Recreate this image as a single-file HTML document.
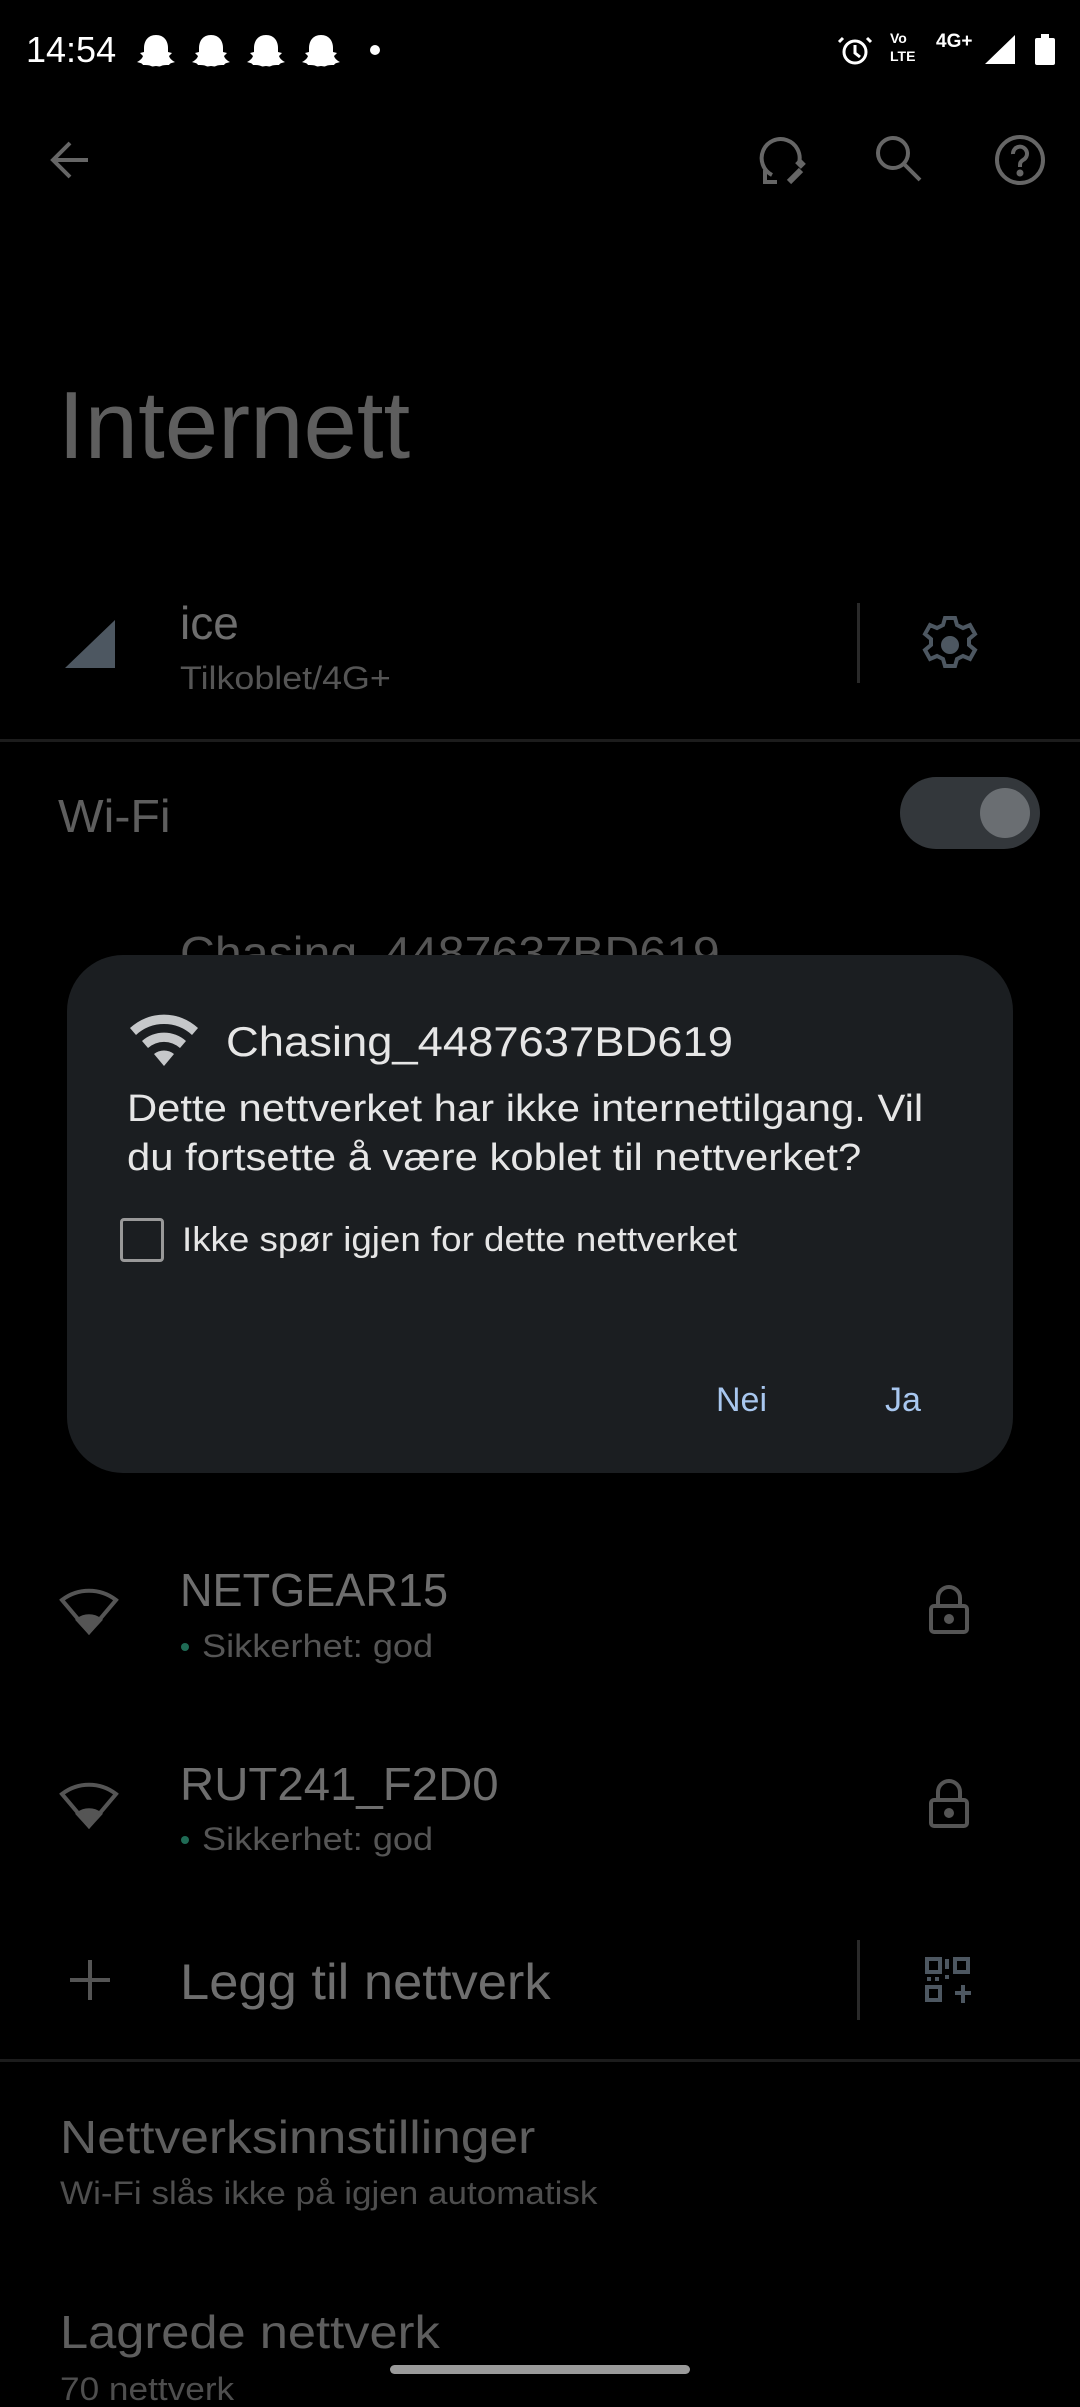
<!DOCTYPE html>
<html><head><meta charset="utf-8">
<style>
html,body{margin:0;padding:0;background:#000;}
body{width:1080px;height:2400px;position:relative;overflow:hidden;font-family:"Liberation Sans",sans-serif;}
.t{position:absolute;white-space:nowrap;line-height:1;transform-origin:0 0;}
svg{position:absolute;overflow:visible;}
</style></head><body>

<!-- status bar -->
<div class="t" style="left:26px;top:32px;font-size:36px;color:#fff;">14:54</div>
<svg width="1080" height="80" style="left:0;top:0">
  <g fill="#fff">
    <path id="g" d="M156 35c-8 0-12 6-12 13v4l-4 1 3 3c-1 3-4 5-6 6 3 1 5 1 6 3 3 0 6 0 8 1 2 1 3 0 5 0s3 1 5 0c2-1 5-1 8-1 1-2 3-2 6-3-2-1-5-3-6-6l3-3-4-1v-4c0-7-4-13-12-13z"/>
    <use href="#g" x="55"/><use href="#g" x="110"/><use href="#g" x="165"/>
    <circle cx="375" cy="50" r="5"/>
    <path d="M985 64L1015 35V64Z"/>
    <rect x="1035" y="38" width="20" height="27" rx="2"/>
    <rect x="1041" y="34" width="8" height="5"/>
  </g>
  <g fill="none" stroke="#fff" stroke-width="3">
    <circle cx="855" cy="52" r="11"/>
    <path d="M855 45v8l5 4M843 38l-4 4M867 38l4 4"/>
  </g>
  <text x="890" y="43" font-size="14" font-weight="bold" fill="#fff" font-family="Liberation Sans">Vo</text>
  <text x="890" y="61" font-size="14" font-weight="bold" fill="#fff" font-family="Liberation Sans">LTE</text>
  <text x="936" y="47" font-size="19" font-weight="bold" fill="#fff" font-family="Liberation Sans">4G+</text>
</svg>

<!-- toolbar -->
<svg width="1080" height="220" style="left:0;top:0" fill="none" stroke="#666" stroke-width="4">
  <path d="M88 160H54M70 143L53 160L70 177"/>
  <path d="M772 175A19 19 0 1 1 799 163"/>
  <path d="M765 170v12h12" />
  <path d="M789 182l12-12" stroke-width="6"/>
  <path d="M798 166l5-5" stroke-width="8"/>
  <circle cx="893" cy="153" r="15"/>
  <path d="M904 164L920 180"/>
  <circle cx="1020" cy="160" r="23"/>
  <path d="M1013 154a7 7 0 1 1 10 6c-3 2-3 3-3 7"/>
  <circle cx="1020" cy="173" r="1.5" fill="#666"/>
</svg>

<div class="t" style="left:58px;top:378px;font-size:96px;color:#5e5e5e;">Internett</div>

<!-- ice row -->
<svg width="80" height="80" style="left:0;top:0"><path d="M65 668L115 620V668Z" fill="#4d5761"/></svg>
<div class="t" style="left:180px;top:600px;font-size:46px;color:#6e6e6e;">ice</div>
<div class="t" style="left:180px;top:662px;font-size:32px;color:#555;transform:scaleX(1.12);">Tilkoblet/4G+</div>
<div style="position:absolute;left:857px;top:603px;width:3px;height:80px;background:#2a2a2a;"></div>
<svg width="60" height="60" style="left:920px;top:615px" fill="none" stroke="#4d5761" stroke-width="4">
  <path d="M25 3h10l2 7 6 3 7-3 5 9-6 5v6l6 5-5 9-7-3-6 3-2 7H25l-2-7-6-3-7 3-5-9 6-5v-6l-6-5 5-9 7 3 6-3z"/>
  <circle cx="30" cy="30" r="7" fill="#4d5761"/>
</svg>
<div style="position:absolute;left:0;top:739px;width:1080px;height:3px;background:#1c1c1c;"></div>

<!-- wifi toggle -->
<div class="t" style="left:58px;top:793px;font-size:46px;color:#5e5e5e;transform:scaleX(1.05);">Wi-Fi</div>
<div style="position:absolute;left:900px;top:777px;width:140px;height:72px;border-radius:36px;background:#33373b;"></div>
<div style="position:absolute;left:980px;top:788px;width:50px;height:50px;border-radius:25px;background:#6a6e72;"></div>

<div class="t" style="left:180px;top:930px;font-size:46px;color:#555;transform:scaleX(1.05);">Chasing_4487637BD619</div>

<!-- dialog -->
<div style="position:absolute;left:67px;top:955px;width:946px;height:518px;border-radius:56px;background:#1b1e21;"></div>
<svg width="80" height="60" style="left:128px;top:1010px" fill="#c6c8ca">
  <path d="M2 18a50 50 0 0 1 68 0l-6 7a41 41 0 0 0-56 0z"/>
  <path d="M14 31a33 33 0 0 1 44 0l-6 7a24 24 0 0 0-32 0z"/>
  <path d="M26 44a16 16 0 0 1 20 0l-10 12z"/>
</svg>
<div class="t" style="left:226px;top:1021px;font-size:42px;color:#e6e6e6;transform:scaleX(1.08);">Chasing_4487637BD619</div>
<div class="t" style="left:127px;top:1085px;font-size:38px;line-height:49px;color:#e6e6e6;transform:scaleX(1.1);">Dette nettverket har ikke internettilgang. Vil<br>du fortsette å være koblet til nettverket?</div>
<div style="position:absolute;left:120px;top:1218px;width:38px;height:38px;border:3px solid #999;border-radius:4px;"></div>
<div class="t" style="left:182px;top:1223px;font-size:34px;color:#e6e6e6;transform:scaleX(1.08);">Ikke spør igjen for dette nettverket</div>
<div class="t" style="left:716px;top:1383px;font-size:34px;color:#a8c7ef;">Nei</div>
<div class="t" style="left:885px;top:1383px;font-size:34px;color:#a8c7ef;">Ja</div>

<!-- networks -->
<svg width="1080" height="500" style="left:0;top:1560px" fill="none" stroke="#555" stroke-width="4">
  <path d="M62 40a44 44 0 0 1 54 0L89 72z"/>
  <path d="M78 60a18 18 0 0 1 22 0L89 72z" fill="#555"/>
  <path d="M62 234a44 44 0 0 1 54 0L89 266z"/>
  <path d="M78 254a18 18 0 0 1 22 0L89 266z" fill="#555"/>
  <rect x="931" y="46" width="36" height="26" rx="3"/>
  <path d="M938 46v-8a11 11 0 0 1 22 0v8"/>
  <circle cx="949" cy="59" r="3" fill="#555"/>
  <rect x="931" y="240" width="36" height="26" rx="3"/>
  <path d="M938 240v-8a11 11 0 0 1 22 0v8"/>
  <circle cx="949" cy="253" r="3" fill="#555"/>
  <path d="M90 400v40M70 420h40"/>
</svg>
<div class="t" style="left:180px;top:1567px;font-size:46px;color:#6e6e6e;transform:scaleX(0.98);">NETGEAR15</div>
<div style="position:absolute;left:181px;top:1643px;width:8px;height:8px;border-radius:4px;background:#1f6b55;"></div>
<div class="t" style="left:202px;top:1630px;font-size:32px;color:#555;transform:scaleX(1.13);">Sikkerhet: god</div>
<div class="t" style="left:180px;top:1761px;font-size:46px;color:#6e6e6e;transform:scaleX(1.03);">RUT241_F2D0</div>
<div style="position:absolute;left:181px;top:1836px;width:8px;height:8px;border-radius:4px;background:#1f6b55;"></div>
<div class="t" style="left:202px;top:1823px;font-size:32px;color:#555;transform:scaleX(1.13);">Sikkerhet: god</div>

<div class="t" style="left:180px;top:1957px;font-size:50px;color:#6e6e6e;transform:scaleX(1.05);">Legg til nettverk</div>
<div style="position:absolute;left:857px;top:1940px;width:3px;height:80px;background:#2a2a2a;"></div>
<svg width="60" height="60" style="left:925px;top:1957px" fill="none" stroke="#4d5761" stroke-width="4">
  <rect x="2" y="2" width="13" height="13"/><rect x="30" y="2" width="13" height="13"/><rect x="2" y="30" width="13" height="13"/>
  <path d="M22 2v10M22 18v4M30 36h16M38 28v18M2 22h4M10 22h4"/>
</svg>
<div style="position:absolute;left:0;top:2059px;width:1080px;height:3px;background:#1c1c1c;"></div>

<div class="t" style="left:60px;top:2114px;font-size:46px;color:#5e5e5e;transform:scaleX(1.12);">Nettverksinnstillinger</div>
<div class="t" style="left:60px;top:2177px;font-size:32px;color:#4e4e4e;transform:scaleX(1.095);">Wi-Fi slås ikke på igjen automatisk</div>
<div class="t" style="left:60px;top:2309px;font-size:46px;color:#5e5e5e;transform:scaleX(1.1);">Lagrede nettverk</div>
<div class="t" style="left:60px;top:2373px;font-size:32px;color:#4e4e4e;transform:scaleX(1.1);">70 nettverk</div>

<div style="position:absolute;left:390px;top:2365px;width:300px;height:9px;border-radius:5px;background:#9a9a9a;"></div>
</body></html>
